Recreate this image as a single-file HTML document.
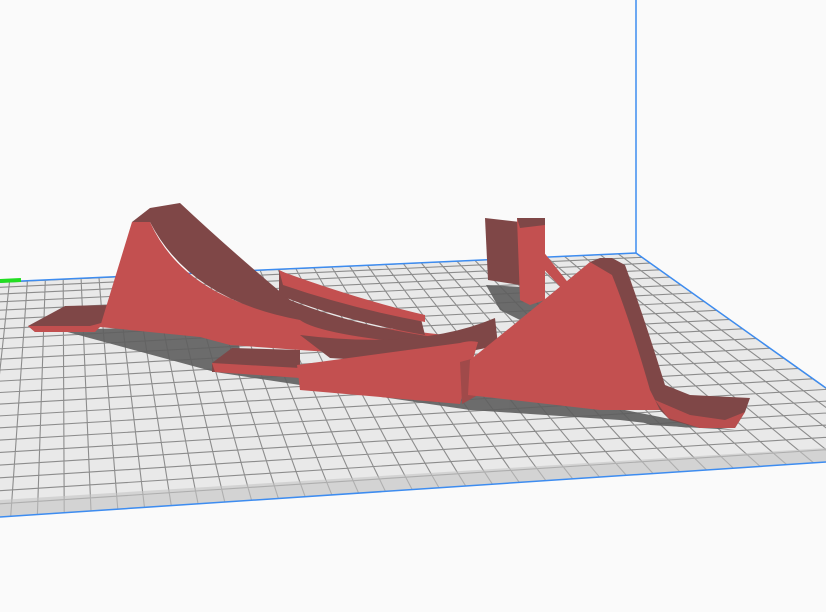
<!DOCTYPE html>
<html><head><meta charset="utf-8"><style>
html,body{margin:0;padding:0;background:#fafafa;width:826px;height:612px;overflow:hidden}
svg{display:block}
</style></head><body>
<svg id="s" width="826" height="612" viewBox="0 0 826 612" xmlns="http://www.w3.org/2000/svg">
<rect width="826" height="612" fill="#fafafa"/>
<defs><clipPath id="pc"><polygon points="0,282 636,253 826,388 826,462 0,517"/></clipPath></defs>
<polygon points="0,282 636,253 826,388 826,462 0,517" fill="#e9e9e9"/>
<g id="grid" clip-path="url(#pc)" stroke="#8c8c8c" stroke-width="1.1" fill="none"></g>
<g clip-path="url(#pc)" fill="#5e5e5e" opacity="0.9">
<polygon points="60,330 235,325 240,350 300,365 470,395 480,390 600,405 690,428 620,420 470,410 300,385 215,372"/>
<polygon points="486,285 540,288 545,300 520,320 500,310"/>
<polygon points="600,405 700,425 735,430 650,425"/>
</g>
<polygon points="0,500 826,448 826,462 0,517" fill="#c4c4c4" opacity="0.6"/>
<polyline points="0,282 636,253 826,388" stroke="#3d8cf0" stroke-width="1.5" fill="none"/>
<polyline points="0,517 826,462" stroke="#3d8cf0" stroke-width="1.5" fill="none"/>
<line x1="636" y1="0" x2="636" y2="253" stroke="#3d8cf0" stroke-width="1.5"/>
<line x1="0" y1="281" x2="21" y2="280" stroke="#22dd22" stroke-width="4"/>
<polygon points="28,326 65,306 110,305 105,322 90,330 35,332" fill="#7f4747"/>
<polygon points="28,326 35,332 95,332 105,322 90,326" fill="#c24f4f"/>
<path d="M100,327 L132,222 L150,222 Q185,300 300,318 L470,338 L472,362 L300,350 L230,345 L200,337 Z" fill="#c35050"/>
<path d="M132,222 L150,208 L180,203 Q230,250 290,300 Q350,325 440,338 L430,345 Q320,335 300,320 Q190,300 150,222 Z" fill="#7f4747"/>
<path d="M279,270 Q340,300 420,315 L425,335 Q340,320 279,295 Z" fill="#7f4747"/>
<path d="M279,270 L283,272 Q360,300 425,315 L425,322 Q350,308 283,285 Z" fill="#c35050"/>
<path d="M300,335 Q420,350 495,318 L498,345 Q420,365 330,358 Z" fill="#7f4747"/>
<polygon points="212,363 232,348 300,350 300,372 212,372" fill="#7f4747"/>
<polygon points="212,363 300,368 300,378 215,372" fill="#c35050"/>
<path d="M297,365 L460,343 Q470,340 478,342 L460,404 L300,390 Z" fill="#c35050"/>
<polygon points="460,362 475,358 478,395 462,404" fill="#a04a4a"/>
<polygon points="485,218 520,222 520,285 488,280" fill="#7f4747"/>
<polygon points="517,218 545,218 545,300 530,305 520,300" fill="#c35050"/>
<polygon points="538,245 570,285 565,292 540,265" fill="#c35050"/>
<polygon points="517,218 545,218 545,225 520,228" fill="#7f4747"/>
<path d="M468,395 L470,360 Q520,320 590,262 L610,258 L625,275 Q645,330 660,390 L665,410 L600,410 Z" fill="#c35050"/>
<path d="M590,262 L600,258 L612,258 L625,265 Q645,320 665,385 L690,395 L750,398 L745,412 L735,428 L700,428 L670,420 L660,410 L650,390 Q630,320 612,275 Z" fill="#7f4747"/>
<path d="M655,400 L668,418 L700,428 L735,428 L745,412 L725,420 L690,415 Z" fill="#c35050" opacity="0.85"/>
</svg>
<script>
(function(){
var g=document.getElementById('grid');
var A=[-80,286],B=[636,253],C=[921,456],D=[-150,527];
function P(u,v){
 var vv=Math.pow(v,1.25);
 var tx=A[0]+(B[0]-A[0])*u, ty=A[1]+(B[1]-A[1])*u;
 var bx=D[0]+(C[0]-D[0])*u, by=D[1]+(C[1]-D[1])*u;
 return [tx+(bx-tx)*vv, ty+(by-ty)*vv];
}
var NS='http://www.w3.org/2000/svg',s='';
var NU=40,NV=22;
for(var i=0;i<=NU;i++){var a=P(i/NU,0),b=P(i/NU,1);s+='M'+a[0].toFixed(1)+','+a[1].toFixed(1)+'L'+b[0].toFixed(1)+','+b[1].toFixed(1);}
for(var j=0;j<=NV;j++){var a=P(0,j/NV),b=P(1,j/NV);s+='M'+a[0].toFixed(1)+','+a[1].toFixed(1)+'L'+b[0].toFixed(1)+','+b[1].toFixed(1);}
var p=document.createElementNS(NS,'path');p.setAttribute('d',s);g.appendChild(p);
})();
</script>
</body></html>
